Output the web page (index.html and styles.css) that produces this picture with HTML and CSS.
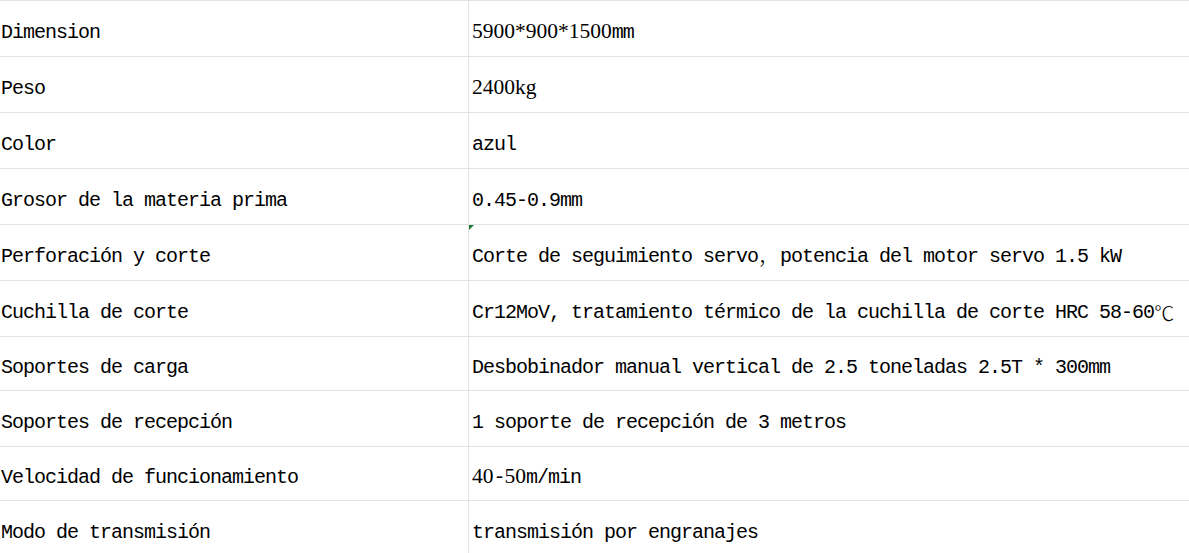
FILE: index.html
```html
<!DOCTYPE html>
<html>
<head>
<meta charset="utf-8">
<link rel="stylesheet" href="styles.css">
</head>
<body>
<div class="sheet">
  <div class="row"><div class="cell key">Dimension</div><div class="cell val"><span class="serif">5900*900*1500</span>mm</div></div>
  <div class="row"><div class="cell key">Peso</div><div class="cell val"><span class="serif">2400kg</span></div></div>
  <div class="row"><div class="cell key">Color</div><div class="cell val">azul</div></div>
  <div class="row"><div class="cell key">Grosor de la materia prima</div><div class="cell val">0.45-0.9mm</div></div>
  <div class="row"><div class="cell key">Perforación y corte</div><div class="cell val flagged">Corte de seguimiento servo<span class="wide">，</span>potencia del motor servo 1.5 kW</div></div>
  <div class="row"><div class="cell key">Cuchilla de corte</div><div class="cell val">Cr12MoV, tratamiento térmico de la cuchilla de corte HRC 58-60<span class="wide">℃</span></div></div>
  <div class="row short"><div class="cell key">Soportes de carga</div><div class="cell val">Desbobinador manual vertical de 2.5 toneladas 2.5T * 300mm</div></div>
  <div class="row"><div class="cell key">Soportes de recepción</div><div class="cell val">1 soporte de recepción de 3 metros</div></div>
  <div class="row short"><div class="cell key">Velocidad de funcionamiento</div><div class="cell val"><span class="serif">40</span>-<span class="serif">50</span>m/min</div></div>
  <div class="row"><div class="cell key">Modo de transmisión</div><div class="cell val">transmisión por engranajes</div></div>
</div>
</body>
</html>
```

FILE: styles.css
```css
html, body {
  margin: 0;
  padding: 0;
  background: #ffffff;
}

.sheet {
  border-top: 1px solid #e4e4e4;
  font-family: "Liberation Mono", "Noto Sans CJK SC", monospace;
  font-size: 20px;
  letter-spacing: -1px;
  color: #000000;
  white-space: nowrap;
}

.row {
  display: grid;
  grid-template-columns: 469px 1fr;
  height: 56px;
  box-sizing: border-box;
  border-bottom: 1px solid #e4e4e4;
}

.row.short {
  height: 54px;
}

.cell {
  display: flex;
  align-items: center;
  padding-top: 7px;
  box-sizing: border-box;
}

.key {
  padding-left: 1px;
  border-right: 1px solid #e4e4e4;
}

.val {
  padding-left: 3px;
  position: relative;
}

.serif {
  font-family: "Liberation Serif", serif;
  font-size: 21.5px;
  letter-spacing: 0;
  position: relative;
  top: -1px;
}

.wide {
  display: inline-block;
  width: 22px;
  font-family: "Noto Sans CJK SC", sans-serif;
  font-size: 20px;
  font-weight: 300;
  letter-spacing: 0;
  text-align: left;
}

.flagged::before {
  content: "";
  position: absolute;
  top: 0;
  left: 0;
  border-top: 5px solid #1e7b34;
  border-right: 5px solid transparent;
}
```
